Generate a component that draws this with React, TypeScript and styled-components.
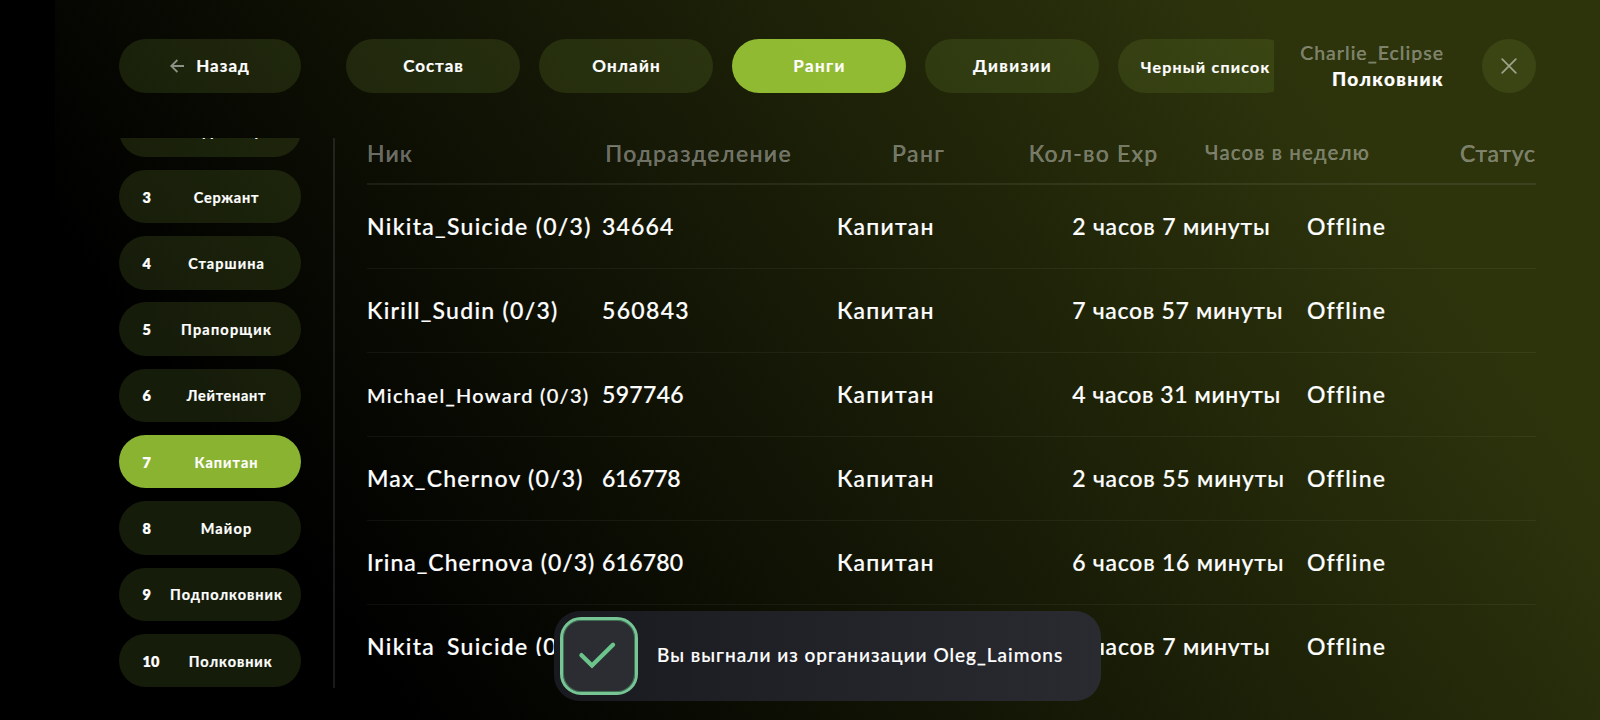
import styled, { createGlobalStyle } from 'styled-components'

const GlobalStyle = createGlobalStyle`
  * {
    box-sizing: border-box;
  }
  body {
    margin: 0;
    background: #000;
    color: #fff;
    font-family: Lato, 'Open Sans', sans-serif;
    font-weight: 500;
    -webkit-text-stroke-width: 0.2px;
  }
  button {
    border: 0;
    margin: 0;
    padding: 0;
    color: inherit;
    font-family: inherit;
    white-space: nowrap;
  }
`

const Screen = styled.div`
  position: relative;
  width: 1600px;
  height: 720px;
  padding-left: 55px;
  overflow: hidden;
  background: #000;
`

const Panel = styled.main`
  height: 100%;
  padding: 39px 64px 0;
  background: linear-gradient(54deg, #000 17.5%, #2d340c 83.1%);
`

const TopBar = styled.header`
  display: flex;
  height: 53.5px;
`

const Pill = styled.button<{ $active?: boolean }>`
  display: flex;
  align-items: center;
  justify-content: center;
  flex-shrink: 0;
  height: 53.5px;
  border-radius: 27px;
  background: ${p => (p.$active ? 'rgba(180, 234, 64, 0.765)' : 'rgba(112, 140, 48, 0.2)')};
  font-weight: 700;
`

const BackButton = styled(Pill)`
  width: 182px;
  gap: 12px;
  margin-right: 45px;
  font-size: 17px;
  letter-spacing: 1px;
`

const Tabs = styled.nav`
  display: flex;
  gap: 19px;
  width: 928px;
  overflow: hidden;
`

const Tab = styled(Pill)<{ $track: number; $small?: boolean }>`
  width: 174px;
  padding: ${p => (p.$small ? 2 : 0)}px 0 0 1px;
  font-size: ${p => (p.$small ? 16 : 17)}px;
  letter-spacing: ${p => p.$track}px;
`

const User = styled.div`
  display: flex;
  flex-direction: column;
  flex: 1;
  align-items: flex-end;
  padding-top: 1px;
  line-height: 26px;
`

const UserName = styled.span`
  font-size: 19.5px;
  letter-spacing: 1px;
  color: rgba(255, 255, 255, 0.4);
`

const UserRank = styled.span`
  font-size: 19px;
  font-weight: 900;
  letter-spacing: 1.4px;
`

const CloseButton = styled(Pill)`
  width: 54px;
  margin-left: 38px;
`

const Content = styled.div`
  display: flex;
  height: 550px;
  margin-top: 45.5px;
`

const RankList = styled.aside`
  width: 182px;
  overflow: hidden;
`

const RankItems = styled.div`
  display: flex;
  flex-direction: column;
  gap: 12.8px;
  margin-top: -34.5px;
`

const RankButton = styled(Pill)`
  width: 181.6px;
  padding: 1px 12px 0 23.5px;
  font-size: 14.5px;
`

const RankNumber = styled.span`
  margin-right: 13.5px;
  font-weight: 800;
  text-align: left;
`

const RankName = styled.span<{ $track: number }>`
  flex: 1;
  text-align: center;
  letter-spacing: ${p => p.$track}px;
`

const Divider = styled.div`
  width: 2px;
  margin: 0 32px;
  background: rgba(255, 255, 255, 0.1);
`

const Table = styled.section`
  width: 1169px;
  letter-spacing: 1.3px;
  font-size: 23px;
  white-space: nowrap;
`

const TableHead = styled.div`
  display: grid;
  grid-template-columns: 238.2px 286.9px 136.6px 176.3px 255px auto;
  height: 47px;
  border-bottom: 2px solid rgba(255, 255, 255, 0.07);
  color: rgba(255, 255, 255, 0.4);
  line-height: 31px;
`

const HeadCell = styled.span<{ $track: number; $small?: boolean }>`
  letter-spacing: ${p => p.$track}px;
  ${p => p.$small && 'font-size: 20.5px; line-height: 29px;'}
`

// The last row is cut where the list scrolls
const TableBody = styled.div`
  height: 470.5px;
  overflow: hidden;
`

const Row = styled.div`
  display: grid;
  grid-template-columns: 235px 235px 235.2px 234.8px auto;
  align-items: center;
  height: 84px;
  padding-bottom: 1px;
  border-bottom: 1px solid rgba(255, 255, 255, 0.05);
`

const Cell = styled.span<{ $track?: number; $small?: boolean }>`
  letter-spacing: ${p => p.$track ?? 1.2}px;
  ${p => p.$small && 'font-size: 20px; padding-top: 1px;'}
`

const Toast = styled.div`
  position: absolute;
  left: 554px;
  top: 611px;
  display: flex;
  align-items: center;
  gap: 19px;
  width: 547px;
  height: 90px;
  padding-left: 6px;
  border-radius: 26px;
  background: linear-gradient(90deg, #191a20, #202127 40%, #2a2a31);
  font-size: 19px;
  letter-spacing: 1.01px;
  white-space: nowrap;
`

const ToastIcon = styled.div`
  width: 78px;
  height: 78px;
  border: 3px solid #77c594;
  border-radius: 21px;
  background: #2c2d32;
  box-shadow: inset 0 0 0 1px #417055;

  svg {
    display: block;
  }
`

const ToastText = styled.span`
  padding-bottom: 3px;
`

const tabs = [
  { label: 'Состав', track: 0.95 },
  { label: 'Онлайн', track: 1.15 },
  { label: 'Ранги', track: 1.35, active: true },
  { label: 'Дивизии', track: 1.35 },
  { label: 'Черный список', track: 1.2, small: true },
]

const ranks = [
  { id: 2, name: 'Ефрейтор', track: 0.9 },
  { id: 3, name: 'Сержант', track: 0.75 },
  { id: 4, name: 'Старшина', track: 1.05 },
  { id: 5, name: 'Прапорщик', track: 1.2 },
  { id: 6, name: 'Лейтенант', track: 0.7 },
  { id: 7, name: 'Капитан', track: 1 },
  { id: 8, name: 'Майор', track: 1.15 },
  { id: 9, name: 'Подполковник', track: 1 },
  { id: 10, name: 'Полковник', track: 0.95 },
]

const currentRank = 7

const columns = [
  { label: 'Ник', track: 1.03 },
  { label: 'Подразделение', track: 1.4 },
  { label: 'Ранг', track: 1.4 },
  { label: 'Кол-во Exp', track: 1.2 },
  { label: 'Часов в неделю', track: 1.09, small: true },
  { label: 'Статус', track: 0.61 },
]

const members = [
  { nick: 'Nikita_Suicide (0/3)', nickTrack: 1.3, unit: '34664', unitTrack: 1.13, time: '2 часов 7 минуты', timeTrack: 0.79 },
  { nick: 'Kirill_Sudin (0/3)', nickTrack: 1.28, unit: '560843', unitTrack: 1.33, time: '7 часов 57 минуты', timeTrack: 0.7 },
  { nick: 'Michael_Howard (0/3)', nickTrack: 1.28, small: true, unit: '597746', unitTrack: 0.33, time: '4 часов 31 минуты', timeTrack: 0.56 },
  { nick: 'Max_Chernov (0/3)', nickTrack: 1.22, unit: '616778', unitTrack: -0.27, time: '2 часов 55 минуты', timeTrack: 0.79 },
  { nick: 'Irina_Chernova (0/3)', nickTrack: 1, unit: '616780', unitTrack: 0.23, time: '6 часов 16 минуты', timeTrack: 0.76 },
  { nick: 'Nikita_Suicide (0/3)', nickTrack: 1.3, unit: '34664', unitTrack: 1.13, time: '2 часов 7 минуты', timeTrack: 0.79 },
]

const ArrowIcon = () => (
  <svg width="14" height="14" viewBox="0 0 14 14" fill="none" stroke="#fff" strokeOpacity="0.5" strokeWidth="1.8">
    <path d="M14 7H1.2M7.4 1L1.2 7l6.2 6" />
  </svg>
)

const CrossIcon = () => (
  <svg width="16" height="16" viewBox="0 0 16 16" stroke="#fff" strokeOpacity="0.5" strokeWidth="1.7" strokeLinecap="round">
    <path d="M1.2 1.2l13.6 13.6M14.8 1.2L1.2 14.8" />
  </svg>
)

const CheckIcon = () => (
  <svg width="72" height="72" viewBox="0 0 72 72" fill="none" stroke="#6bc48b" strokeWidth="4.4" strokeLinecap="round">
    <path d="M18.5 35.2L29 45.5L50 24.8" />
  </svg>
)

const App = () => (
  <>
    <GlobalStyle />
    <Screen>
      <Panel>
        <TopBar>
          <BackButton>
            <ArrowIcon />
            Назад
          </BackButton>
          <Tabs>
            {tabs.map(tab => (
              <Tab key={tab.label} $active={tab.active} $track={tab.track} $small={tab.small}>
                {tab.label}
              </Tab>
            ))}
          </Tabs>
          <User>
            <UserName>Charlie_Eclipse</UserName>
            <UserRank>Полковник</UserRank>
          </User>
          <CloseButton aria-label="Закрыть">
            <CrossIcon />
          </CloseButton>
        </TopBar>
        <Content>
          <RankList>
            <RankItems>
              {ranks.map(rank => (
                <RankButton key={rank.id} $active={rank.id === currentRank}>
                  <RankNumber>{rank.id}</RankNumber>
                  <RankName $track={rank.track}>{rank.name}</RankName>
                </RankButton>
              ))}
            </RankItems>
          </RankList>
          <Divider />
          <Table>
            <TableHead>
              {columns.map(col => (
                <HeadCell key={col.label} $track={col.track} $small={col.small}>
                  {col.label}
                </HeadCell>
              ))}
            </TableHead>
            <TableBody>
              {members.map((m, i) => (
                <Row key={i}>
                  <Cell $track={m.nickTrack} $small={m.small}>
                    {m.nick}
                  </Cell>
                  <Cell $track={m.unitTrack}>{m.unit}</Cell>
                  <Cell>Капитан</Cell>
                  <Cell $track={m.timeTrack}>{m.time}</Cell>
                  <Cell>Offline</Cell>
                </Row>
              ))}
            </TableBody>
          </Table>
        </Content>
      </Panel>
      <Toast>
        <ToastIcon>
          <CheckIcon />
        </ToastIcon>
        <ToastText>Вы выгнали из организации Oleg_Laimons</ToastText>
      </Toast>
    </Screen>
  </>
)

export default App
